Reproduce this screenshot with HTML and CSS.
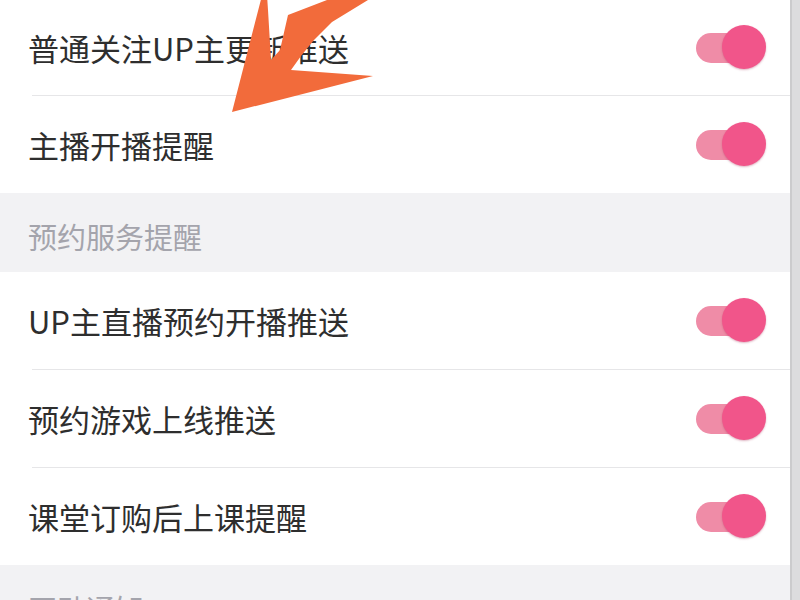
FILE: index.html
```html
<!DOCTYPE html>
<html lang="zh-CN">
<head>
    <meta charset="UTF-8">
    <meta name="viewport" content="width=device-width, initial-scale=1.0">
    <title>推送设置</title>
    <link rel="stylesheet" href="styles.css">
</head>
<body>

<div class="screen">
    <div class="settings">
        <!-- 关注推送 -->
        <div class="row row-first">
            <span class="label">普通关注UP主更新推送</span>
            <span class="switch on"><span class="knob"></span></span>
        </div>
        <div class="row">
            <span class="label">主播开播提醒</span>
            <span class="switch on"><span class="knob"></span></span>
        </div>

        <div class="group-title">预约服务提醒</div>
        <div class="row">
            <span class="label">UP主直播预约开播推送</span>
            <span class="switch on"><span class="knob"></span></span>
        </div>
        <div class="row">
            <span class="label">预约游戏上线推送</span>
            <span class="switch on"><span class="knob"></span></span>
        </div>
        <div class="row">
            <span class="label">课堂订购后上课提醒</span>
            <span class="switch on"><span class="knob"></span></span>
        </div>

        <div class="group-title">互动通知</div>
    </div>
    <div class="scrollbar"></div>

    <!-- 标注箭头 -->
    <svg class="pointer" width="800" height="600" viewBox="0 0 800 600">
        <polygon points="232,112 266,-20 268,10 271,60 280,50 288,15 327,0 335,-5 374,-5 368,0 332,22 314,40 301,56 291,70 373,76" fill="#f26b3b"/>
    </svg>
</div>

</body>
</html>
```

FILE: styles.css
```css
body {
    margin: 0;
    font-family: "Noto Sans CJK SC", "Noto Sans", sans-serif;
    background-color: #ffffff;
    color: #2e2e2e;
}
.screen {
    position: relative;
    display: flex;
    width: 800px;
    height: 600px;
    overflow: hidden;
}
.settings {
    flex: 1;
    display: flex;
    flex-direction: column;
}
.row {
    display: flex;
    align-items: center;
    justify-content: space-between;
    flex-shrink: 0;
    height: 97px;
    padding: 0 24px 0 28px;
    position: relative;
}
.row-first {
    height: 95px;
}
/* divider between rows, inset from the left */
.row + .row {
    border-top: 1px solid transparent;
}
.row + .row::before {
    content: "";
    position: absolute;
    left: 32px;
    right: 0;
    top: -1px;
    height: 1px;
    background-color: #e6e6e8;
}
.label {
    font-size: 31px;
    line-height: 1;
}
.group-title {
    flex-shrink: 0;
    height: 79px;
    box-sizing: border-box;
    padding: 29px 0 0 28px;
    background-color: #f2f2f4;
    color: #a4a4ac;
    font-size: 29px;
    line-height: 1;
}
.switch {
    position: relative;
    width: 70px;
    height: 46px;
    filter: blur(0.6px);
}
.switch .knob {
    position: absolute;
    right: 0;
    top: 0;
    width: 44px;
    height: 44px;
    border-radius: 50%;
    background-color: #f1558a;
    box-shadow: 0 1px 2px rgba(160, 40, 80, 0.35);
}
.switch::before {
    content: "";
    position: absolute;
    left: 0;
    top: 8px;
    width: 50px;
    height: 30px;
    border-radius: 15px;
    background-color: #ef8ca7;
}
.scrollbar {
    width: 8px;
    background-color: #dcdcde;
    border-left: 2px solid #cbcbcd;
}
.pointer {
    position: absolute;
    left: 0;
    top: 0;
    pointer-events: none;
}
```
